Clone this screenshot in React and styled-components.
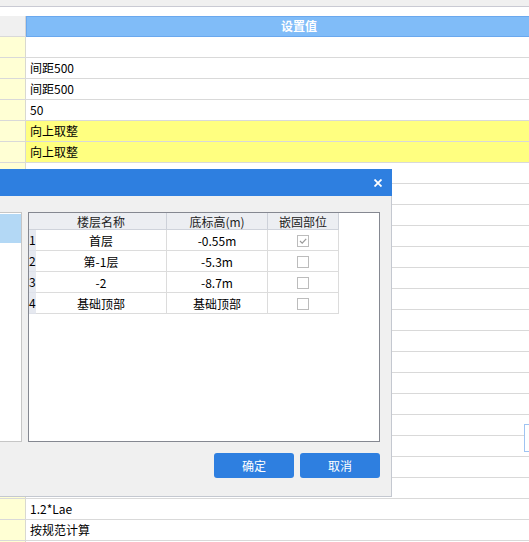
import React from 'react';
import styled, { createGlobalStyle } from 'styled-components';

const Global = createGlobalStyle`
  html, body { margin: 0; padding: 0; }
  body {
    width: 529px;
    height: 542px;
    overflow: hidden;
    background: #fff;
    font-family: "Noto Sans CJK SC", "Microsoft YaHei", sans-serif;
    font-size: 12px;
    color: #000;
  }
  * { box-sizing: border-box; }
`;

const Page = styled.div`
  position: relative;
  width: 529px;
  height: 542px;
  overflow: hidden;
`;

const TopStrip = styled.div`
  height: 7px;
  background: #f0f0f0;
  border-bottom: 1px solid #c9cad3;
`;

const Gap = styled.div`
  height: 9px;
  background: #fff;
`;

const Sheet = styled.div`
  width: 572px;
  display: flex;
  flex-direction: column;
`;

const Row = styled.div`
  display: flex;
  height: 21px;
  border-bottom: 1px solid #d9d9d9;
`;

const HeadRow = styled.div`
  display: flex;
  height: 21px;
`;

const KeyHead = styled.div`
  width: 26px;
  background: #f0f0f0;
  border-right: 1px solid #d4d4d4;
  border-bottom: 1px solid #d9d9d9;
`;

const ValueHead = styled.div`
  flex: 1;
  background: #80bcf8;
  border: 1px solid #6aa8ee;
  color: #fff;
  font-weight: bold;
  text-align: center;
  line-height: 18px;
`;

const KeyCell = styled.div`
  width: 26px;
  background: #ffffd4;
  border-right: 1px solid #d9d9d0;
`;

const ValueCell = styled.div`
  flex: 1;
  background: ${(p) => (p.$hl ? '#ffff80' : '#fff')};
  padding-left: 4px;
  line-height: 20px;
  white-space: nowrap;
`;

const EditBracket = styled.div`
  position: absolute;
  left: 524px;
  top: 424px;
  width: 20px;
  height: 28px;
  border: 1px solid #9fc4f2;
  background: #fff;
`;

const Dialog = styled.div`
  position: absolute;
  left: -208px;
  top: 169px;
  width: 600px;
  display: flex;
  flex-direction: column;
`;

const TitleBar = styled.div`
  height: 27px;
  background: #2e7fe0;
  display: flex;
  align-items: center;
  justify-content: flex-end;
  padding-right: 10px;
`;

const CloseBtn = styled.div`
  width: 8px;
  height: 8px;
  display: flex;
  margin-top: 1px;
`;

const Body = styled.div`
  background: #f0f0f0;
  border-right: 1px solid #c4c8d0;
  border-bottom: 1px solid #c4c8d0;
  padding: 16px 11px 18px 11px;
  display: flex;
  flex-direction: column;
`;

const Panels = styled.div`
  display: flex;
  gap: 6px;
  height: 230px;
`;

const LeftList = styled.div`
  flex: 1;
  background: #fff;
  border: 1px solid #c6c6c6;
  padding: 1px 0 0 0;
`;

const ListItem = styled.div`
  height: 29px;
  background: ${(p) => (p.$selected ? '#b3d8f5' : 'transparent')};
`;

const TableBox = styled.div`
  width: 352px;
  background: #fff;
  border: 1px solid #858891;
  display: flex;
  flex-direction: column;
`;

const TRow = styled.div`
  display: flex;
  height: ${(p) => (p.$head ? '17px' : '21px')};
`;

const NumCell = styled.div`
  width: 7px;
  background: ${(p) => (p.$head ? '#eceef2' : '#e6e9f0')};
  border-bottom: 1px solid ${(p) => (p.$head ? '#cfd3db' : '#dfe2ea')};
  line-height: 20px;
  font-size: 12px;
  overflow: visible;
  white-space: nowrap;
  padding-left: 0px;
`;

const Cell = styled.div`
  width: ${(p) => p.$w}px;
  display: flex;
  align-items: center;
  justify-content: center;
  white-space: nowrap;
  color: ${(p) => (p.$head ? '#222' : '#000')};
  background: ${(p) => (p.$head ? '#eceef2' : '#fff')};
  border-right: 1px solid ${(p) => (p.$head ? '#cdd1d9' : '#dcdcdc')};
  border-bottom: 1px solid ${(p) => (p.$head ? '#cfd3db' : '#dcdcdc')};
  padding-top: ${(p) => (p.$head ? '0' : '1px')};
`;

const CheckBox = styled.div`
  width: 12px;
  height: 12px;
  border: 1px solid #bcbcbc;
  background: #fff;
  display: flex;
  align-items: center;
  justify-content: center;
`;

const ButtonRow = styled.div`
  display: flex;
  justify-content: flex-end;
  gap: 6px;
  margin-top: 11px;
`;

const Button = styled.button`
  width: 80px;
  height: 25px;
  border: none;
  border-radius: 3px;
  background: #2e7fe0;
  color: #fff;
  font-family: "Noto Sans CJK SC", "Microsoft YaHei", sans-serif;
  font-size: 12px;
  padding: 0;
`;

const sheetRows = [
  { v: '' },
  { v: '间距500' },
  { v: '间距500' },
  { v: '50' },
  { v: '向上取整', hl: true },
  { v: '向上取整', hl: true },
  ...Array.from({ length: 16 }, () => ({ v: '' })),
  { v: '1.2*Lae' },
  { v: '按规范计算' },
  { v: '' },
];

const floors = [
  { n: '1', name: '首层', h: '-0.55m', checked: true },
  { n: '2', name: '第-1层', h: '-5.3m' },
  { n: '3', name: '-2', h: '-8.7m' },
  { n: '4', name: '基础顶部', h: '基础顶部' },
];

const CloseIcon = () => (
  <svg width="8" height="8" viewBox="0 0 8 8">
    <path d="M0.5 0.5 L7.5 7.5 M7.5 0.5 L0.5 7.5" stroke="#fff" strokeWidth="1.8" />
  </svg>
);

const CheckMark = () => (
  <svg width="10" height="10" viewBox="0 0 10 10">
    <path d="M2 5 L4.2 7.2 L8.2 2.8" stroke="#9a9a9a" strokeWidth="1.2" fill="none" />
  </svg>
);

export default function App() {
  return (
    <Page>
      <Global />
      <TopStrip />
      <Gap />
      <Sheet>
        <HeadRow>
          <KeyHead />
          <ValueHead>设置值</ValueHead>
        </HeadRow>
        {sheetRows.map((r, i) => (
          <Row key={i}>
            <KeyCell />
            <ValueCell $hl={r.hl}>{r.v}</ValueCell>
          </Row>
        ))}
      </Sheet>
      <EditBracket />
      <Dialog>
        <TitleBar>
          <CloseBtn>
            <CloseIcon />
          </CloseBtn>
        </TitleBar>
        <Body>
          <Panels>
            <LeftList>
              <ListItem $selected />
            </LeftList>
            <TableBox>
              <TRow $head>
                <NumCell $head />
                <Cell $head $w={131}>楼层名称</Cell>
                <Cell $head $w={101}>底标高(m)</Cell>
                <Cell $head $w={71}>嵌固部位</Cell>
              </TRow>
              {floors.map((f) => (
                <TRow key={f.n}>
                  <NumCell>{f.n}</NumCell>
                  <Cell $w={131}>{f.name}</Cell>
                  <Cell $w={101}>{f.h}</Cell>
                  <Cell $w={71}>
                    <CheckBox>{f.checked && <CheckMark />}</CheckBox>
                  </Cell>
                </TRow>
              ))}
            </TableBox>
          </Panels>
          <ButtonRow>
            <Button>确定</Button>
            <Button>取消</Button>
          </ButtonRow>
        </Body>
      </Dialog>
    </Page>
  );
}
